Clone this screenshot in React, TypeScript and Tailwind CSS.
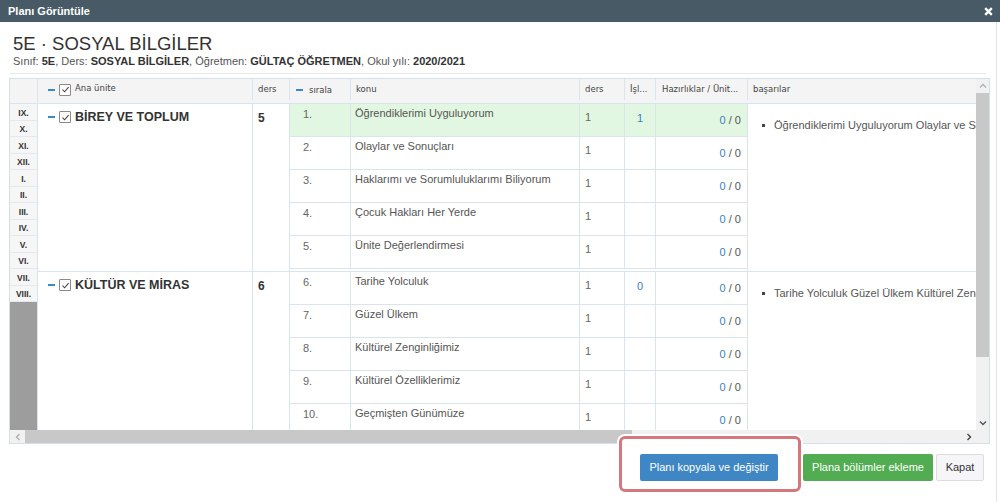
import React from "react";

const months = ["IX.", "X.", "XI.", "XII.", "I.", "II.", "III.", "IV.", "V.", "VI.", "VII.", "VIII."];

type Row = { no: string; konu: string; isl?: string; active?: boolean };

const groups: { name: string; ders: string; basar: string; rows: Row[] }[] = [
  {
    name: "BİREY VE TOPLUM",
    ders: "5",
    basar:
      "Öğrendiklerimi Uyguluyorum Olaylar ve Sonuçları Haklarımı ve Sorumluluklarımı Biliyorum Çocuk Hakları Her Yerde Ünite Değerlendirmesi",
    rows: [
      { no: "1.", konu: "Öğrendiklerimi Uyguluyorum", isl: "1", active: true },
      { no: "2.", konu: "Olaylar ve Sonuçları" },
      { no: "3.", konu: "Haklarımı ve Sorumluluklarımı Biliyorum" },
      { no: "4.", konu: "Çocuk Hakları Her Yerde" },
      { no: "5.", konu: "Ünite Değerlendirmesi" },
    ],
  },
  {
    name: "KÜLTÜR VE MİRAS",
    ders: "6",
    basar: "Tarihe Yolculuk Güzel Ülkem Kültürel Zenginliğimiz Kültürel Özelliklerimiz Geçmişten Günümüze",
    rows: [
      { no: "6.", konu: "Tarihe Yolculuk", isl: "0" },
      { no: "7.", konu: "Güzel Ülkem" },
      { no: "8.", konu: "Kültürel Zenginliğimiz" },
      { no: "9.", konu: "Kültürel Özelliklerimiz" },
      { no: "10.", konu: "Geçmişten Günümüze" },
    ],
  },
];

function Minus() {
  return <span className="block w-[7px] h-[2px] shrink-0 bg-[#3b8ac4]" />;
}

function Check() {
  return (
    <span className="flex w-[12px] h-[12px] shrink-0 items-center justify-center border border-[#8a8a8a] bg-white rounded-[1px]">
      <svg width="9" height="9" viewBox="0 0 9 9">
        <polyline points="1.5,4.6 3.6,6.8 7.6,2.2" fill="none" stroke="#444" strokeWidth="1.1" />
      </svg>
    </span>
  );
}

function Chevron({ dir, color }: { dir: "up" | "down" | "left" | "right"; color: string }) {
  const pts = {
    up: "1,5.5 4,2.5 7,5.5",
    down: "1,2.5 4,5.5 7,2.5",
    left: "5.5,1 2.5,4 5.5,7",
    right: "2.5,1 5.5,4 2.5,7",
  }[dir];
  return (
    <svg width="8" height="8" viewBox="0 0 8 8">
      <polyline points={pts} fill="none" stroke={color} strokeWidth="1.4" />
    </svg>
  );
}

function SubRow({ r }: { r: Row }) {
  return (
    <div className={`flex h-[33px] shrink-0 border-b border-[#d9e4ef] ${r.active ? "bg-[#e2f7e1]" : ""}`}>
      <div className="w-[61px] shrink-0 border-r border-[#d9e4ef] pl-[13px] pt-[3px] text-[#666]">{r.no}</div>
      <div className="w-[229px] shrink-0 border-r border-[#d9e4ef] pl-[4px] pt-[2px]">{r.konu}</div>
      <div className="w-[45px] shrink-0 border-r border-[#d9e4ef] pl-[5px] pt-[6px] text-[#666]">1</div>
      <div className="w-[31px] shrink-0 border-r border-[#d9e4ef] pt-[7px] text-center text-[#3a80c2]">{r.isl}</div>
      <div className="w-[92px] shrink-0 border-r border-[#d9e4ef] pr-[6px] pt-[9px] text-right text-[#555]">
        <span className="text-[#3a80c2]">0</span> / 0
      </div>
    </div>
  );
}

export default function App() {
  return (
    <div className="w-[1000px] h-[502px] overflow-hidden bg-white font-['Liberation_Sans',Arial,sans-serif] text-[#555]">
      <div className="flex h-[22px] items-center justify-between bg-[#475a65] pl-[8px] pr-[7px]">
        <span className="text-[11px] font-bold text-white">Planı Görüntüle</span>
        <svg width="9" height="9" viewBox="0 0 9 9">
          <path d="M1.2 1.2 L7.8 7.8 M7.8 1.2 L1.2 7.8" stroke="white" strokeWidth="2.4" />
        </svg>
      </div>

      <div className="w-[997px] h-[480px] border-r border-[#e3e3e3] px-[9px]">
        <div className="ml-[1px] mr-[1px] border-b border-[#e8e8e8] pl-[3px] pt-[11px] pb-[5px]">
          <h1 className="text-[18.5px] leading-[21px] text-[#333]">5E · SOSYAL BİLGİLER</h1>
          <p className="mt-[1px] text-[11px] leading-[13px] text-[#555]">
            Sınıf: <b className="text-[#333]">5E</b>, Ders: <b className="text-[#333]">SOSYAL BİLGİLER</b>, Öğretmen:{" "}
            <b className="text-[#333]">GÜLTAÇ ÖĞRETMEN</b>, Okul yılı: <b className="text-[#333]">2020/2021</b>
          </p>
        </div>

        <div className="mt-[4px] w-[981px] border border-[#d3dfeb]">
          <div className="flex">
            <div className="h-[351px] min-w-0 flex-1 overflow-hidden">
              <div className="flex h-full">
                <div className="flex w-[28px] shrink-0 flex-col border-r border-[#d9e4ef]">
                  <div className="h-[25px] shrink-0 border-b border-[#d9e4ef] bg-[#f4f4f4]" />
                  {months.map((m) => (
                    <div
                      key={m}
                      className="flex h-[16.5px] shrink-0 items-center justify-center border-b border-[#e3e9f0] bg-[#f6f6f6] pt-[2px] text-[8.5px] font-bold leading-[10px] text-[#333]"
                    >
                      {m}
                    </div>
                  ))}
                  <div className="flex-1 bg-[#9d9d9d]" />
                </div>

                <div className="flex flex-col">
                  <div className="flex h-[25px] shrink-0 items-center border-b border-[#d9e4ef] bg-[#f4f4f4] pb-[3px] font-['DejaVu_Sans',sans-serif] text-[8.5px] text-[#444]">
                    <div className="flex h-full w-[215px] shrink-0 items-center gap-[4px] border-r border-[#d9e4ef] pl-[10px]">
                      <Minus />
                      <Check />
                      <span className="-mt-[3px]">Ana ünite</span>
                    </div>
                    <div className="flex h-full w-[37px] shrink-0 items-center border-r border-[#d9e4ef] pl-[5px]">ders</div>
                    <div className="flex h-full w-[61px] shrink-0 items-center gap-[6px] border-r border-[#d9e4ef] pl-[6px]">
                      <Minus />
                      <span className="mt-[2px]">sırala</span>
                    </div>
                    <div className="flex h-full w-[229px] shrink-0 items-center border-r border-[#d9e4ef] pl-[5px]">konu</div>
                    <div className="flex h-full w-[45px] shrink-0 items-center border-r border-[#d9e4ef] pl-[5px]">ders</div>
                    <div className="flex h-full w-[31px] shrink-0 items-center border-r border-[#d9e4ef] pl-[5px]">İşl...</div>
                    <div className="flex h-full w-[92px] shrink-0 items-center border-r border-[#d9e4ef] pl-[6px]">
                      Hazırlıklar / Ünit...
                    </div>
                    <div className="flex h-full w-[600px] shrink-0 items-center pl-[5px]">başarılar</div>
                  </div>

                  {groups.map((g) => (
                    <div key={g.name} className="flex shrink-0 border-b border-[#d9e4ef] text-[11px] leading-[14px]">
                      <div className="w-[215px] shrink-0 border-r border-[#d9e4ef] pl-[10px] pt-[6px]">
                        <div className="flex items-center gap-[4px]">
                          <Minus />
                          <Check />
                          <span className="text-[12.5px] font-bold text-[#333]">{g.name}</span>
                        </div>
                      </div>
                      <div className="w-[37px] shrink-0 border-r border-[#d9e4ef] pl-[5px] pt-[7px] text-[12px] font-bold text-[#333]">
                        {g.ders}
                      </div>
                      <div className="flex w-[458px] shrink-0 flex-col border-r border-[#d9e4ef] pb-[2px]">
                        {g.rows.map((r) => (
                          <SubRow key={r.no} r={r} />
                        ))}
                      </div>
                      <div className="w-[600px] shrink-0 overflow-hidden pl-[14px] pt-[14px]">
                        <div className="flex items-center gap-[9px] whitespace-nowrap">
                          <span className="block h-[3px] w-[3px] shrink-0 bg-[#444]" />
                          <span>{g.basar}</span>
                        </div>
                      </div>
                    </div>
                  ))}
                </div>
              </div>
            </div>

            <div className="flex h-[351px] w-[13px] shrink-0 flex-col bg-[#f1f1f1]">
              <div className="flex h-[14px] items-center justify-center">
                <Chevron dir="up" color="#b0b0b0" />
              </div>
              <div className="h-[264px] bg-[#c8c8c8]" />
              <div className="flex-1" />
              <div className="flex h-[14px] items-center justify-center">
                <Chevron dir="down" color="#555" />
              </div>
            </div>
          </div>

          <div className="flex h-[13px] bg-[#f1f1f1]">
            <div className="flex w-[15px] items-center justify-center">
              <Chevron dir="left" color="#b0b0b0" />
            </div>
            <div className="w-[607px] bg-[#c8c8c8]" />
            <div className="flex-1" />
            <div className="flex w-[14px] items-center justify-center">
              <Chevron dir="right" color="#444" />
            </div>
            <div className="w-[13px]" />
          </div>
        </div>

        <div className="mt-[10px] flex justify-end pr-[3px] text-[11px]">
          <div className="relative">
            <div className="absolute -left-[21px] -right-[23px] -top-[18px] -bottom-[11px] rounded-[6px] border-[3px] border-[#d4787e] bg-white ring-2 ring-white" />
            <button className="relative flex h-[27px] w-[138px] items-center justify-center rounded-[2px] bg-[#3f86c4] text-white">
              Planı kopyala ve değiştir
            </button>
          </div>
          <button className="ml-[25px] flex h-[27px] w-[130px] items-center justify-center rounded-[2px] bg-[#52ad52] text-white">
            Plana bölümler ekleme
          </button>
          <button className="ml-[3px] flex h-[27px] w-[48px] items-center justify-center rounded-[2px] border border-[#dcdcdc] bg-[#f6f6f9] text-[#333]">
            Kapat
          </button>
        </div>
      </div>
    </div>
  );
}
